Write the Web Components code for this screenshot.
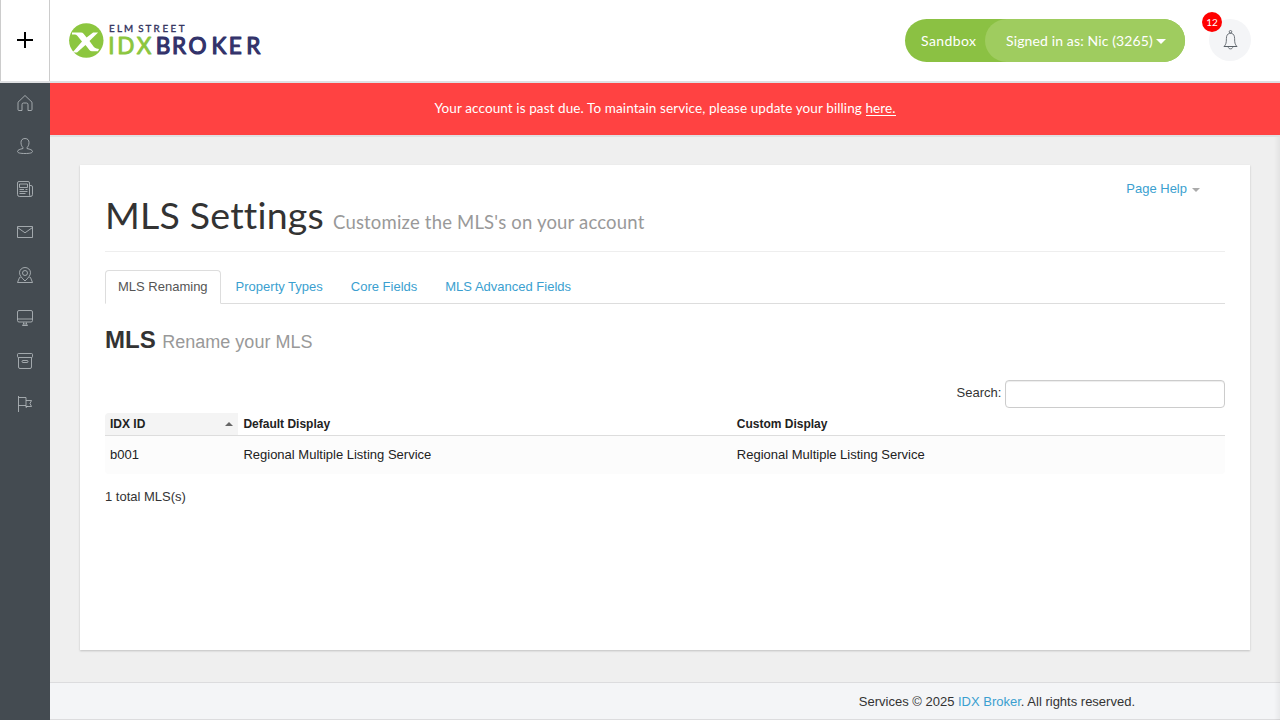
<!DOCTYPE html>
<html lang="en">
<head>
<meta charset="utf-8">
<title>MLS Settings</title>
<style>
html, body { margin: 0; height: 100%; }
body { font: 13px/18px "Liberation Sans", Arial, sans-serif; color: #333; overflow: hidden; background: #efefef; }
</style>
</head>
<body>
<idx-app></idx-app>
<script>
const define = (name, html, setup) => {
  const tpl = document.createElement('template');
  tpl.innerHTML = html;
  customElements.define(name, class extends HTMLElement {
    connectedCallback() {
      if (this.shadowRoot) return;
      this.attachShadow({ mode: 'open' }).append(tpl.content.cloneNode(true));
      if (setup) setup(this, this.shadowRoot);
    }
  });
};

/* Text tracked so that it fills a given width */
define('fit-text', `<style>:host{display:inline-block;white-space:nowrap}span{display:inline-block;text-decoration:inherit}</style><span><slot></slot></span>`,
  el => { el.style.width = el.getAttribute('width') + 'px'; });

const ICONS = {
  home: '<path d="M1 7.200 8 .5l7 6.700v7.300q0 1-1 1h-3V9.700q0-1.700-1.500-1.700h-3Q5 8 5 9.700V15.500H2q-1 0-1-1z"/>',
  user: '<path d="M8 .5C5.300.500 4 2.200 4 4.500c0 2.700 1.200 4.200 2 5.200v.8C3 11.200.5 12 .5 13.500.5 15 3.500 15.500 8 15.500s7.500-.5 7.500-2c0-1.500-2.500-2.300-5.500-3V9.700c.8-1 2-2.500 2-5.200C12 2.200 10.700.5 8 .5z"/>',
  news: '<path d="M12.500 13V2q0-1.500-1.500-1.500H2Q.5.5.5 2v11.500q0 2 2 2h11q2 0 2-2V6q0-1.500-1.500-1.500h-1.500M12.500 13q0 1.500 1 2.500M2.500 3h8v3.500h-8zM2.500 8.500h4.500M8.500 8.500h2M2.500 10.500h8M2.500 12.500h6"/>',
  mail: '<path d="M.5 2.500h15v11H.5zM.5 3.500 8 8.800l7.500-5.300"/>',
  pin: '<path d="M8 14C5 11 2.500 8.700 2.500 5.700a5.500 5.200 0 0 1 11 0C13.500 8.700 11 11 8 14z"/><circle cx="8" cy="6" r="2.500"/><path d="M3.500 10.500h-1L.5 15.500h15l-2-5h-1"/>',
  screen: '<rect x=".5" y=".5" width="15" height="11.500" rx="1.500"/><path d="M.5 9h15M6.500 12.500v1.500l-1 1.500h5l-1-1.500v-1.500M8 13v2"/>',
  box: '<rect x=".5" y=".5" width="15" height="4" rx="1"/><path d="M1.500 4.500v9.500q0 1.500 1.500 1.500h10q1.500 0 1.500-1.500V4.500"/><rect x="5" y="7.500" width="6" height="2" rx="1"/>',
  flag: '<path d="M1.500 0v16M1.500 1.500h7.500v8h-7.500M9 4.500h5.500l-1.500 3 1.500 3H9M9 9.500v2l2-1.500"/>',
  bell: '<path d="M7.800 3.200C5.200 3.800 4.400 6 4.400 8.500c0 4.500-.4 5.500-2.200 8h12.600c-1.800-2.500-2.200-3.500-2.200-8 0-2.500-.8-4.700-3.400-5.300zM1.800 16.500h13.400M6.300 17.200c0 2.200 4.400 2.200 4.400 0"/><circle cx="8.500" cy="1.800" r="1.300"/>'
};
define('line-icon', `<style>:host{display:block;width:16px;height:16px}svg{display:block;overflow:visible;fill:none;stroke:currentColor;stroke-width:.85;stroke-linejoin:round}</style><svg width="16" height="16"></svg>`,
  (el, root) => { root.querySelector('svg').innerHTML = ICONS[el.getAttribute('name')]; });

define('brand-logo', `<style>:host{display:block}svg{display:block}text{font-family:Lato,sans-serif;stroke-linejoin:round}</style>
<svg width="200" height="40">
  <circle cx="17.300" cy="17.500" r="17.200" fill="#8cc63f"/>
  <path fill="#fff" d="M3 9.500h9q1.600 0 2.600 1.200l3 3.800 6.500-5h5L20.500 18l4 5.500q1.200 1.600 3 2l2.500.5-1 2.300h-6q-1.600 0-2.600-1.400L16.500 22 8 29.500H3.500L13 18.500 8.300 12.800q-1.100-1.300-2.600-1.300H3z"/>
  <g fill="#32325d" stroke="#32325d" stroke-width=".35" font-size="9.800"><text x="40 48 55" y="8.500">ELM</text><text x="69.200 76.500 84.400 93.400 101.600 109.800" y="8.500">STREET</text></g>
  <text x="39.200 48.300 67.800" y="31" font-size="22.500" fill="#8cc63f" stroke="#8cc63f" stroke-width=".9">IDX</text>
  <text x="86.800 103 119.500 142.500 159.700 177.300" y="31" font-size="22.500" fill="#32326a" stroke="#32326a" stroke-width="1.200">BROKER</text>
</svg>`);

define('top-bar', `<style>
:host{display:flex;height:81px;background:#fff;border-bottom:2px solid #dfe0e2;align-items:center;font-family:Lato,sans-serif}
.add{box-sizing:border-box;width:50px;height:81px;border:solid #ccc;border-width:0 1px;display:grid;place-items:center;padding-bottom:1px}
.add svg{display:block}
brand-logo{margin-left:19px;margin-top:5px}
.account{margin-left:auto;display:flex;width:280px;height:43px;border-radius:22px;background:#8bc143;color:#fff;font-size:14px;line-height:44px}
.account .box{width:80px;padding-left:16px;box-sizing:border-box}
.user{width:200px;box-sizing:border-box;border-radius:22px;background:#9fcc5f;padding-left:21px;display:flex;align-items:center}
.caret{border:5px solid transparent;border-top-color:#fff;border-bottom:0;margin-left:3px;margin-top:1px}
.bell{position:relative;width:42px;height:42px;border-radius:50%;background:#f4f5f7;margin:0 29px 0 24px;color:#555c63;display:grid;place-items:center;top:-1px}
.bell line-icon{height:20px}
.count{position:absolute;left:-7px;top:-7px;width:20px;height:20px;border-radius:50%;background:#f00;color:#fff;font-size:10px;line-height:21px;text-align:center;font-family:Lato,sans-serif}
</style>
<div class="add"><svg width="16" height="16"><path d="M8 0v16M0 8h16" stroke="#000" stroke-width="2"/></svg></div>
<brand-logo></brand-logo>
<div class="account"><div class="box"><fit-text width="55.500">Sandbox</fit-text></div><div class="user"><fit-text width="147">Signed in as: Nic (3265)</fit-text><i class="caret"></i></div></div>
<div class="bell"><line-icon name="bell"></line-icon><span class="count">12</span></div>`);

define('side-nav', `<style>
:host{display:flex;flex-direction:column;align-items:center;gap:27px;width:50px;background:#444b51;padding-top:12px;box-sizing:border-box;color:#b4b9bd}
</style>
${['home','user','news','mail','pin','screen','box','flag'].map(n => `<line-icon name="${n}"></line-icon>`).join('')}`);

define('alert-banner', `<style>
:host{display:block;height:52px;background:#ff4242;border-bottom:2px solid #dfe0e2;color:#fff;text-align:center;font:13.500px/51px Lato,sans-serif}
a{display:inline-block;line-height:14px;border-bottom:1px solid #fff}
</style><fit-text width="431">Your account is past due. To maintain service, please update your billing&nbsp;</fit-text><a><fit-text width="30">here.</fit-text></a>`);

define('page-heading', `<style>
:host{display:flex;align-items:baseline;height:63px;margin-top:23px;border-bottom:1px solid #eee;font-family:Lato,sans-serif}
.t{font-size:37.500px;line-height:53px;width:228px;font-weight:400}
.s{font-size:18.500px;color:#999}
</style><div class="t"><fit-text width="218"><slot></slot></fit-text></div><div class="s"><fit-text width="311.500">Customize the MLS's on your account</fit-text></div>`);

define('tab-strip', `<style>
:host{display:flex;gap:2px;margin-top:18px;border-bottom:1px solid #ddd;height:33px}
a{box-sizing:border-box;height:34px;padding:7px 12px 0;border:1px solid transparent;color:#3b9fd0;line-height:18px;white-space:nowrap}
a.on{border-color:#ddd;border-bottom-color:#fff;border-radius:4px 4px 0 0;background:#fff;color:#555}
</style><a class="on">MLS Renaming</a><a>Property Types</a><a>Core Fields</a><a>MLS Advanced Fields</a>`);

define('mls-table', `<style>
:host{display:block}
h3{margin:16px 0 0;font-size:24px;line-height:40px;height:60px;color:#333}
small{font-size:18px;font-weight:400;color:#999}
.search{display:flex;justify-content:flex-end;gap:3.600px;line-height:26px}
input{box-sizing:border-box;width:220px;height:28px;border:1px solid #ccc;border-radius:4px;box-shadow:inset 0 1px 1px rgba(0,0,0,.075);background:#fff}
.row{display:grid;grid-template-columns:133.400px 493.400px 1fr}
.row>*{padding:0 5px}
.head{margin-top:5px;height:22px;border-bottom:1px solid #ddd;font:bold 12px/22px "Liberation Sans",sans-serif;color:#222}
.sort{background:#f4f4f4;border-radius:4px 0 0 0;display:flex;justify-content:space-between;align-items:center}
.sort i{border:4px solid transparent;border-bottom-color:#666;border-top:0}
.data{height:38px;line-height:38px;background:#fcfcfc;color:#222;border-radius:0 0 4px 4px}
.total{margin-top:14px;line-height:18px}
</style>
<h3>MLS <small>Rename your MLS</small></h3>
<label class="search">Search: <input></label>
<div class="row head"><div class="sort">IDX ID<i></i></div><div>Default Display</div><div>Custom Display</div></div>
<div class="row data"><div>b001</div><div>Regional Multiple Listing Service</div><div>Regional Multiple Listing Service</div></div>
<div class="total">1 total MLS(s)</div>`);

define('content-card', `<style>
:host{display:flow-root;box-sizing:border-box;height:485px;margin:28px 30px 0;padding:0 25px;background:#fff;box-shadow:0 1px 2px rgba(0,0,0,.2);position:relative}
.help{position:absolute;top:15px;right:50px;display:flex;align-items:center;gap:5px;line-height:18px;color:#3b9fd0}
.help i{border:4px solid transparent;border-top-color:#aaa;border-bottom:0;margin-top:1px}
</style><slot></slot><div class="help">Page Help<i></i></div>`);

define('page-footer', `<style>
:host{display:block;box-sizing:border-box;height:38px;margin-top:auto;border:solid #dcdcde;border-width:1px 0;background:#f4f5f7;line-height:37px;text-align:right;padding-right:145px}
a{color:#3b9fd0}
</style>Services © 2025 <a>IDX Broker</a>. All rights reserved.`);

define('idx-app', `<style>
:host{display:flex;flex-direction:column;height:100vh}
.body{display:flex;flex:1;min-height:0}
main{flex:1;display:flex;flex-direction:column;background:#efefef;position:relative}
main::after{content:"";position:absolute;right:0;top:54px;bottom:0;width:6px;background:linear-gradient(90deg,transparent,rgba(0,0,0,.05))}
</style>
<top-bar></top-bar>
<div class="body"><side-nav></side-nav><main><alert-banner></alert-banner>
<content-card><page-heading>MLS Settings</page-heading><tab-strip></tab-strip><mls-table></mls-table></content-card>
<page-footer></page-footer></main></div>`);

/* Tracking is settled once every element is in place */
const settle = root => root.querySelectorAll('*').forEach(el => {
  if (!el.shadowRoot) return;
  if (el.localName === 'fit-text') {
    const s = el.shadowRoot.querySelector('span');
    s.style.letterSpacing = '0';
    const slot = el.querySelector('slot');
    const text = slot ? slot.assignedNodes({ flatten: true }).map(x => x.textContent).join('') : el.textContent;
    s.style.letterSpacing = (el.getAttribute('width') - s.getBoundingClientRect().width) / text.length + 'px';
  }
  settle(el.shadowRoot);
});
settle(document);
</script>
</body>
</html>
